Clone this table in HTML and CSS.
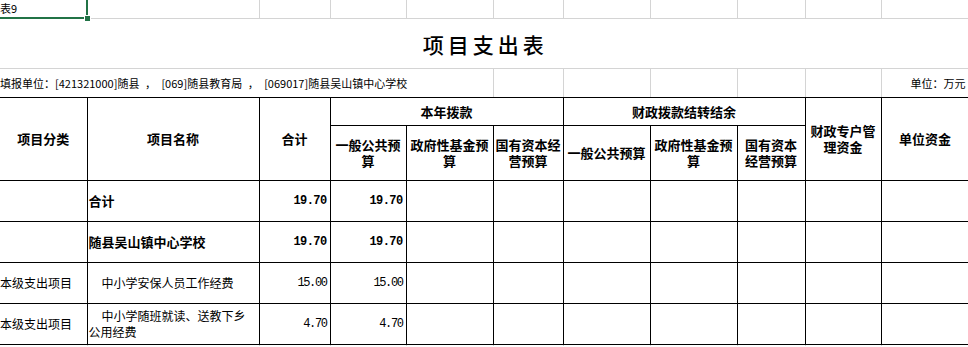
FILE: index.html
```html
<!DOCTYPE html>
<html lang="zh-CN">
<head>
<meta charset="utf-8">
<title>项目支出表</title>
<link rel="stylesheet" href="styles.css">
</head>
<body>
<table class="sheet">
  <colgroup>
    <col class="c1"><col class="c2"><col class="c3"><col class="c4"><col class="c5"><col class="c6"><col class="c7"><col class="c8"><col class="c9"><col class="c10"><col class="c11">
  </colgroup>
  <tbody>
    <tr class="r-top">
      <td class="g sel-cell small"><span class="sel-text">表9</span><span class="sel-box"></span><span class="sel-handle"></span></td>
      <td class="g"></td><td class="g"></td><td class="g"></td><td class="g"></td><td class="g"></td><td class="g"></td><td class="g"></td><td class="g"></td><td class="g"></td><td class="g"></td>
    </tr>
    <tr class="r-title">
      <td class="g title" colspan="11">项目支出表</td>
    </tr>
    <tr class="r-unit">
      <td class="u small nowrap" colspan="5">填报单位：[421321000]随县&ensp;，&ensp;[069]随县教育局&ensp;，&ensp;[069017]随县吴山镇中心学校</td>
      <td class="u"></td><td class="u"></td><td class="u"></td><td class="u"></td><td class="u"></td>
      <td class="u small unit">单位：万元</td>
    </tr>
    <tr class="r-h1">
      <td class="h first" rowspan="2">项目分类</td>
      <td class="h" rowspan="2">项目名称</td>
      <td class="h" rowspan="2">合计</td>
      <td class="h" colspan="3">本年拨款</td>
      <td class="h" colspan="3">财政拨款结转结余</td>
      <td class="h" rowspan="2">财政专户管理资金</td>
      <td class="h" rowspan="2">单位资金</td>
    </tr>
    <tr class="r-h2">
      <td class="h">一般公共预算</td>
      <td class="h">政府性基金预算</td>
      <td class="h">国有资本经营预算</td>
      <td class="h">一般公共预算</td>
      <td class="h">政府性基金预算</td>
      <td class="h narrow">国有资本经营预算</td>
    </tr>
    <tr class="r-d">
      <td class="d first"></td>
      <td class="d name b">合计</td>
      <td class="d num b">19.70</td>
      <td class="d num b">19.70</td>
      <td class="d"></td><td class="d"></td><td class="d"></td><td class="d"></td><td class="d"></td><td class="d"></td><td class="d"></td>
    </tr>
    <tr class="r-d">
      <td class="d first"></td>
      <td class="d name b">随县吴山镇中心学校</td>
      <td class="d num b">19.70</td>
      <td class="d num b">19.70</td>
      <td class="d"></td><td class="d"></td><td class="d"></td><td class="d"></td><td class="d"></td><td class="d"></td><td class="d"></td>
    </tr>
    <tr class="r-d">
      <td class="d first cat">本级支出项目</td>
      <td class="d name indent">中小学安保人员工作经费</td>
      <td class="d num">15.00</td>
      <td class="d num">15.00</td>
      <td class="d"></td><td class="d"></td><td class="d"></td><td class="d"></td><td class="d"></td><td class="d"></td><td class="d"></td>
    </tr>
    <tr class="r-d">
      <td class="d first cat">本级支出项目</td>
      <td class="d name indent wrap2">中小学随班就读、送教下乡公用经费</td>
      <td class="d num">4.70</td>
      <td class="d num">4.70</td>
      <td class="d"></td><td class="d"></td><td class="d"></td><td class="d"></td><td class="d"></td><td class="d"></td><td class="d"></td>
    </tr>
    <tr class="r-empty">
      <td class="e"></td><td class="e"></td><td class="e"></td><td class="e"></td><td class="e"></td><td class="e"></td><td class="e"></td><td class="e"></td><td class="e"></td><td class="e"></td><td class="e"></td>
    </tr>
  </tbody>
</table>
</body>
</html>
```

FILE: styles.css
```css
html, body {
  margin: 0;
  padding: 0;
  background: #fff;
  overflow: hidden;
}

body {
  font-family: "Noto Sans CJK SC", "Noto Sans", sans-serif;
  color: #000;
}

.sheet {
  border-collapse: collapse;
  table-layout: fixed;
  width: 969px;
}

.c1 { width: 87px; }
.c2 { width: 172px; }
.c3 { width: 71px; }
.c4 { width: 76px; }
.c5 { width: 87px; }
.c6 { width: 70px; }
.c7 { width: 87px; }
.c8 { width: 87px; }
.c9 { width: 68px; }
.c10 { width: 76px; }
.c11 { width: 88px; }

td {
  padding: 0 2px;
  vertical-align: middle;
  overflow: visible;
}

/* grid rows above the table */
.g {
  border-right: 1px solid #d4d4d4;
  border-bottom: 1px solid #d4d4d4;
}
.u {
  border-right: 1px solid #d4d4d4;
  border-bottom: 1px solid #000;
}
.e {
  border-right: 1px solid #d4d4d4;
}

.r-top td { height: 18px; }
.r-title td { height: 49px; }
.r-unit td { height: 28px; }
.r-h1 td { height: 27px; }
.r-h2 td { height: 54px; }
.r-d td { height: 40px; }
.r-empty td { height: 1px; }

.small {
  font-size: 11px;
  line-height: 13px;
}

.nowrap { white-space: nowrap; padding-left: 0; }

.unit {
  text-align: right;
  padding-right: 3px;
  white-space: nowrap;
}

.title {
  text-align: center;
  font-size: 21px;
  font-weight: 500;
  letter-spacing: 4px;
  padding-left: 4px;
  line-height: 24px;
}

/* selected cell */
.sel-cell {
  position: relative;
  padding-left: 0;
}
.sel-text { position: relative; top: -1px; }
.sel-box {
  position: absolute;
  left: -2px;
  top: -2px;
  right: -1px;
  bottom: -1px;
  border: 2px solid #217346;
  pointer-events: none;
}
.sel-handle {
  position: absolute;
  right: -3px;
  bottom: -3px;
  width: 5px;
  height: 5px;
  background: #217346;
  box-shadow: 0 0 0 1px #fff;
}

/* header */
.h {
  border: 1px solid #000;
  text-align: center;
  font-weight: 700;
  font-size: 13px;
  line-height: 16px;
  padding: 0 1px;
}
.h.narrow { padding: 0 5px; }

.first { border-left: none !important; }

/* data */
.d {
  border: 1px solid #000;
  font-size: 12px;
  line-height: 16px;
}
.d.b { font-weight: 700; font-size: 13px; }
.name { padding-left: 1px; }
.indent { text-indent: 13px; }
.wrap2 { padding-right: 10px; }
.cat { padding-left: 0; white-space: nowrap; }

.num {
  text-align: right;
  padding-right: 3px;
  font-family: "Liberation Mono", "DejaVu Sans Mono", monospace;
  font-size: 12px;
  letter-spacing: -1.4px;
}
.num.b {
  font-size: 12px;
  letter-spacing: -0.6px;
}
```
